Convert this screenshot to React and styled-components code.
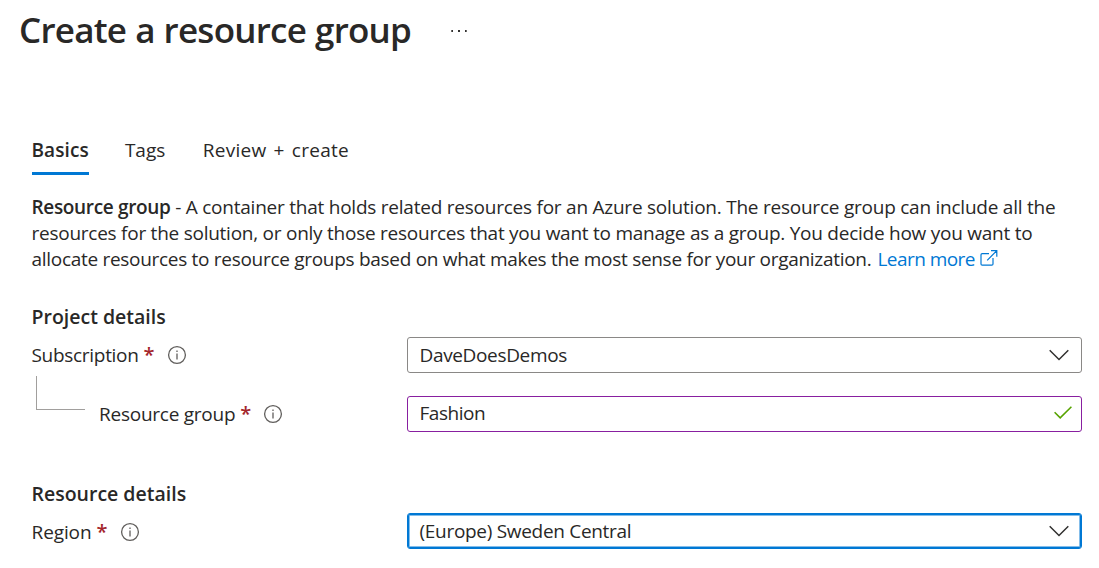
import React from 'react';
import styled, { createGlobalStyle } from 'styled-components';

const Global = createGlobalStyle`
  * { box-sizing: border-box; }
  body {
    margin: 0;
    background: #fff;
    color: #292827;
    font-family: "Open Sans", "Noto Sans", sans-serif;
    font-size: 19px;
    overflow: hidden;
  }
`;

const Page = styled.main`
  width: 1099px;
  height: 568px;
  padding: 7px 17px 0 19px;
`;
const Header = styled.header`
  display: flex;
  align-items: center;
  height: 46px;
`;
const Title = styled.h1`
  margin: 0;
  width: 431px;
  font-size: 35px;
  line-height: 46px;
  font-weight: 600;
  letter-spacing: -0.76px;
  word-spacing: 0.6px;
  white-space: nowrap;
`;
const MoreButton = styled.button`
  display: flex;
  padding: 2px 0 0;
  border: 0;
  background: none;
  color: #323130;
`;
const Body = styled.div`
  padding-left: 12.5px;
`;
const Tabs = styled.nav`
  display: flex;
  gap: 36px;
  margin-top: 74px;
  height: 48px;
`;
const Tab = styled.span`
  line-height: 46px;
  height: 48px;
  white-space: nowrap;
  font-weight: ${p => (p.$active ? 600 : 400)};
  border-bottom: 3px solid ${p => (p.$active ? '#0078d4' : 'transparent')};
  letter-spacing: ${p => p.$ls || 0}px;
  word-spacing: ${p => p.$ws || 0}px;
  margin-left: ${p => p.$shift || 0}px;
`;
const Intro = styled.p`
  margin: 19px 0 0;
  line-height: 26px;
  white-space: nowrap;
`;
const Line = styled.span`
  display: block;
  height: 26px;
  letter-spacing: ${p => p.$ls}px;
`;
const Strong = styled.strong`
  font-weight: 600;
  letter-spacing: -0.34px;
`;
const Link = styled.a`
  color: #0078d4;
  margin-left: 1.5px;
  letter-spacing: -0.55px;
  svg { margin-left: 5.5px; vertical-align: 0; }
`;
const Section = styled.section`
  margin-top: ${p => p.$top}px;
`;
const SectionTitle = styled.h2`
  margin: 0;
  font-size: 19.5px;
  font-weight: 600;
  line-height: 30px;
  height: 35px;
  letter-spacing: ${p => p.$ls || 0}px;
`;
const Row = styled.div`
  display: flex;
  align-items: center;
  height: 36px;
  margin-top: ${p => p.$top || 0}px;
`;
const Label = styled.label`
  display: flex;
  align-items: center;
  width: 375.5px;
  line-height: 36px;
  letter-spacing: ${p => p.$ls || 0}px;
  white-space: nowrap;
`;
const Required = styled.span`
  margin: 0 13px 0 5px;
  width: 10px;
  color: #a4262c;
  font-size: 20px;
  font-weight: 600;
  letter-spacing: 0;
`;
const Branch = styled.i`
  align-self: flex-start;
  width: 49px;
  height: 34px;
  margin: -20px 14px 0 4.5px;
  border: solid #a19f9d;
  border-width: 0 0 1px 1px;
`;
const Field = styled.div`
  display: flex;
  align-items: center;
  justify-content: space-between;
  width: 675px;
  height: 36px;
  padding: 0 ${p => (p.$check ? 9 : 12)}px ${p => (p.$check ? 2 : 1)}px 11.5px;
  border: 1px solid ${p => p.$color};
  border-radius: 3px;
  letter-spacing: ${p => p.$ls}px;
  white-space: nowrap;
  box-shadow: ${p => (p.$focus ? 'inset 0 0 0 1px #0078d4, inset 0 0 0 2px #83bdea' : 'none')};
  margin-top: ${p => (p.$focus ? -2 : 0)}px;
`;

const Info = () => (
  <svg width="20" height="20" viewBox="0 0 20 20" fill="none" stroke="#605e5c">
    <circle cx="10" cy="10" r="8.4" strokeWidth="1.3" />
    <path d="M10 8.5v6M10 5.5v1.5" strokeWidth="1.3" />
  </svg>
);
const Chevron = () => (
  <svg width="20" height="12" viewBox="0 0 20 12" fill="none" stroke="#323130" strokeWidth="1.5">
    <path d="M.7 1.2 10 10.5l9.3-9.3" />
  </svg>
);
const Check = () => (
  <svg width="18" height="14" viewBox="0 0 18 14" fill="none" stroke="#57a300" strokeWidth="1.6">
    <path d="M.6 6.3 6.2 11.8 17.4.7" />
  </svg>
);
const External = () => (
  <svg width="18" height="16" viewBox="0 0 18 16" fill="none" stroke="#0078d4" strokeWidth="1.2">
    <path d="M9 3.6H2.2Q1 3.6 1 4.8v9.1q0 1.2 1.2 1.2h9.6q1.2 0 1.2-1.2V8M7.2 10.3 16.6.8M11 .7h5.8v6" />
  </svg>
);
const Dots = () => (
  <svg width="18" height="4" viewBox="0 0 18 4" fill="#323130">
    <path d="M1.3 1H3v2H1.3zM8 1h2v2H8zM15 1h1.7v2H15z" />
  </svg>
);

export default function App() {
  return (
    <>
      <Global />
      <Page>
        <Header>
          <Title>Create a resource group</Title>
          <MoreButton aria-label="More actions"><Dots /></MoreButton>
        </Header>
        <Body>
          <Tabs>
            <Tab $active $ls={0.1}>Basics</Tab>
            <Tab>Tags</Tab>
            <Tab $ls={0.25} $ws={2} $shift={1.5}>Review + create</Tab>
          </Tabs>
          <Intro>
            <Line $ls={-0.235}><Strong>Resource group</Strong> - A container that holds related resources for an Azure solution. The resource group can include all the</Line>
            <Line $ls={-0.25}>resources for the solution, or only those resources that you want to manage as a group. You decide how you want to</Line>
            <Line $ls={-0.295}>allocate resources to resource groups based on what makes the most sense for your organization. <Link>Learn more<External /></Link></Line>
          </Intro>
          <Section $top={30}>
            <SectionTitle>Project details</SectionTitle>
            <Row>
              <Label $ls={-0.3}>Subscription<Required>*</Required><Info /></Label>
              <Field $color="#8a8886" $ls={-0.35}>DaveDoesDemos<Chevron /></Field>
            </Row>
            <Row $top={23}>
              <Label $ls={-0.25}><Branch />Resource group<Required>*</Required><Info /></Label>
              <Field $color="#881fa0" $ls={-0.45} $check>Fashion<Check /></Field>
            </Row>
          </Section>
          <Section $top={47}>
            <SectionTitle>Resource details</SectionTitle>
            <Row>
              <Label $ls={-0.1}>Region<Required>*</Required><Info /></Label>
              <Field $color="#0078d4" $ls={-0.3} $focus>(Europe) Sweden Central<Chevron /></Field>
            </Row>
          </Section>
        </Body>
      </Page>
    </>
  );
}
